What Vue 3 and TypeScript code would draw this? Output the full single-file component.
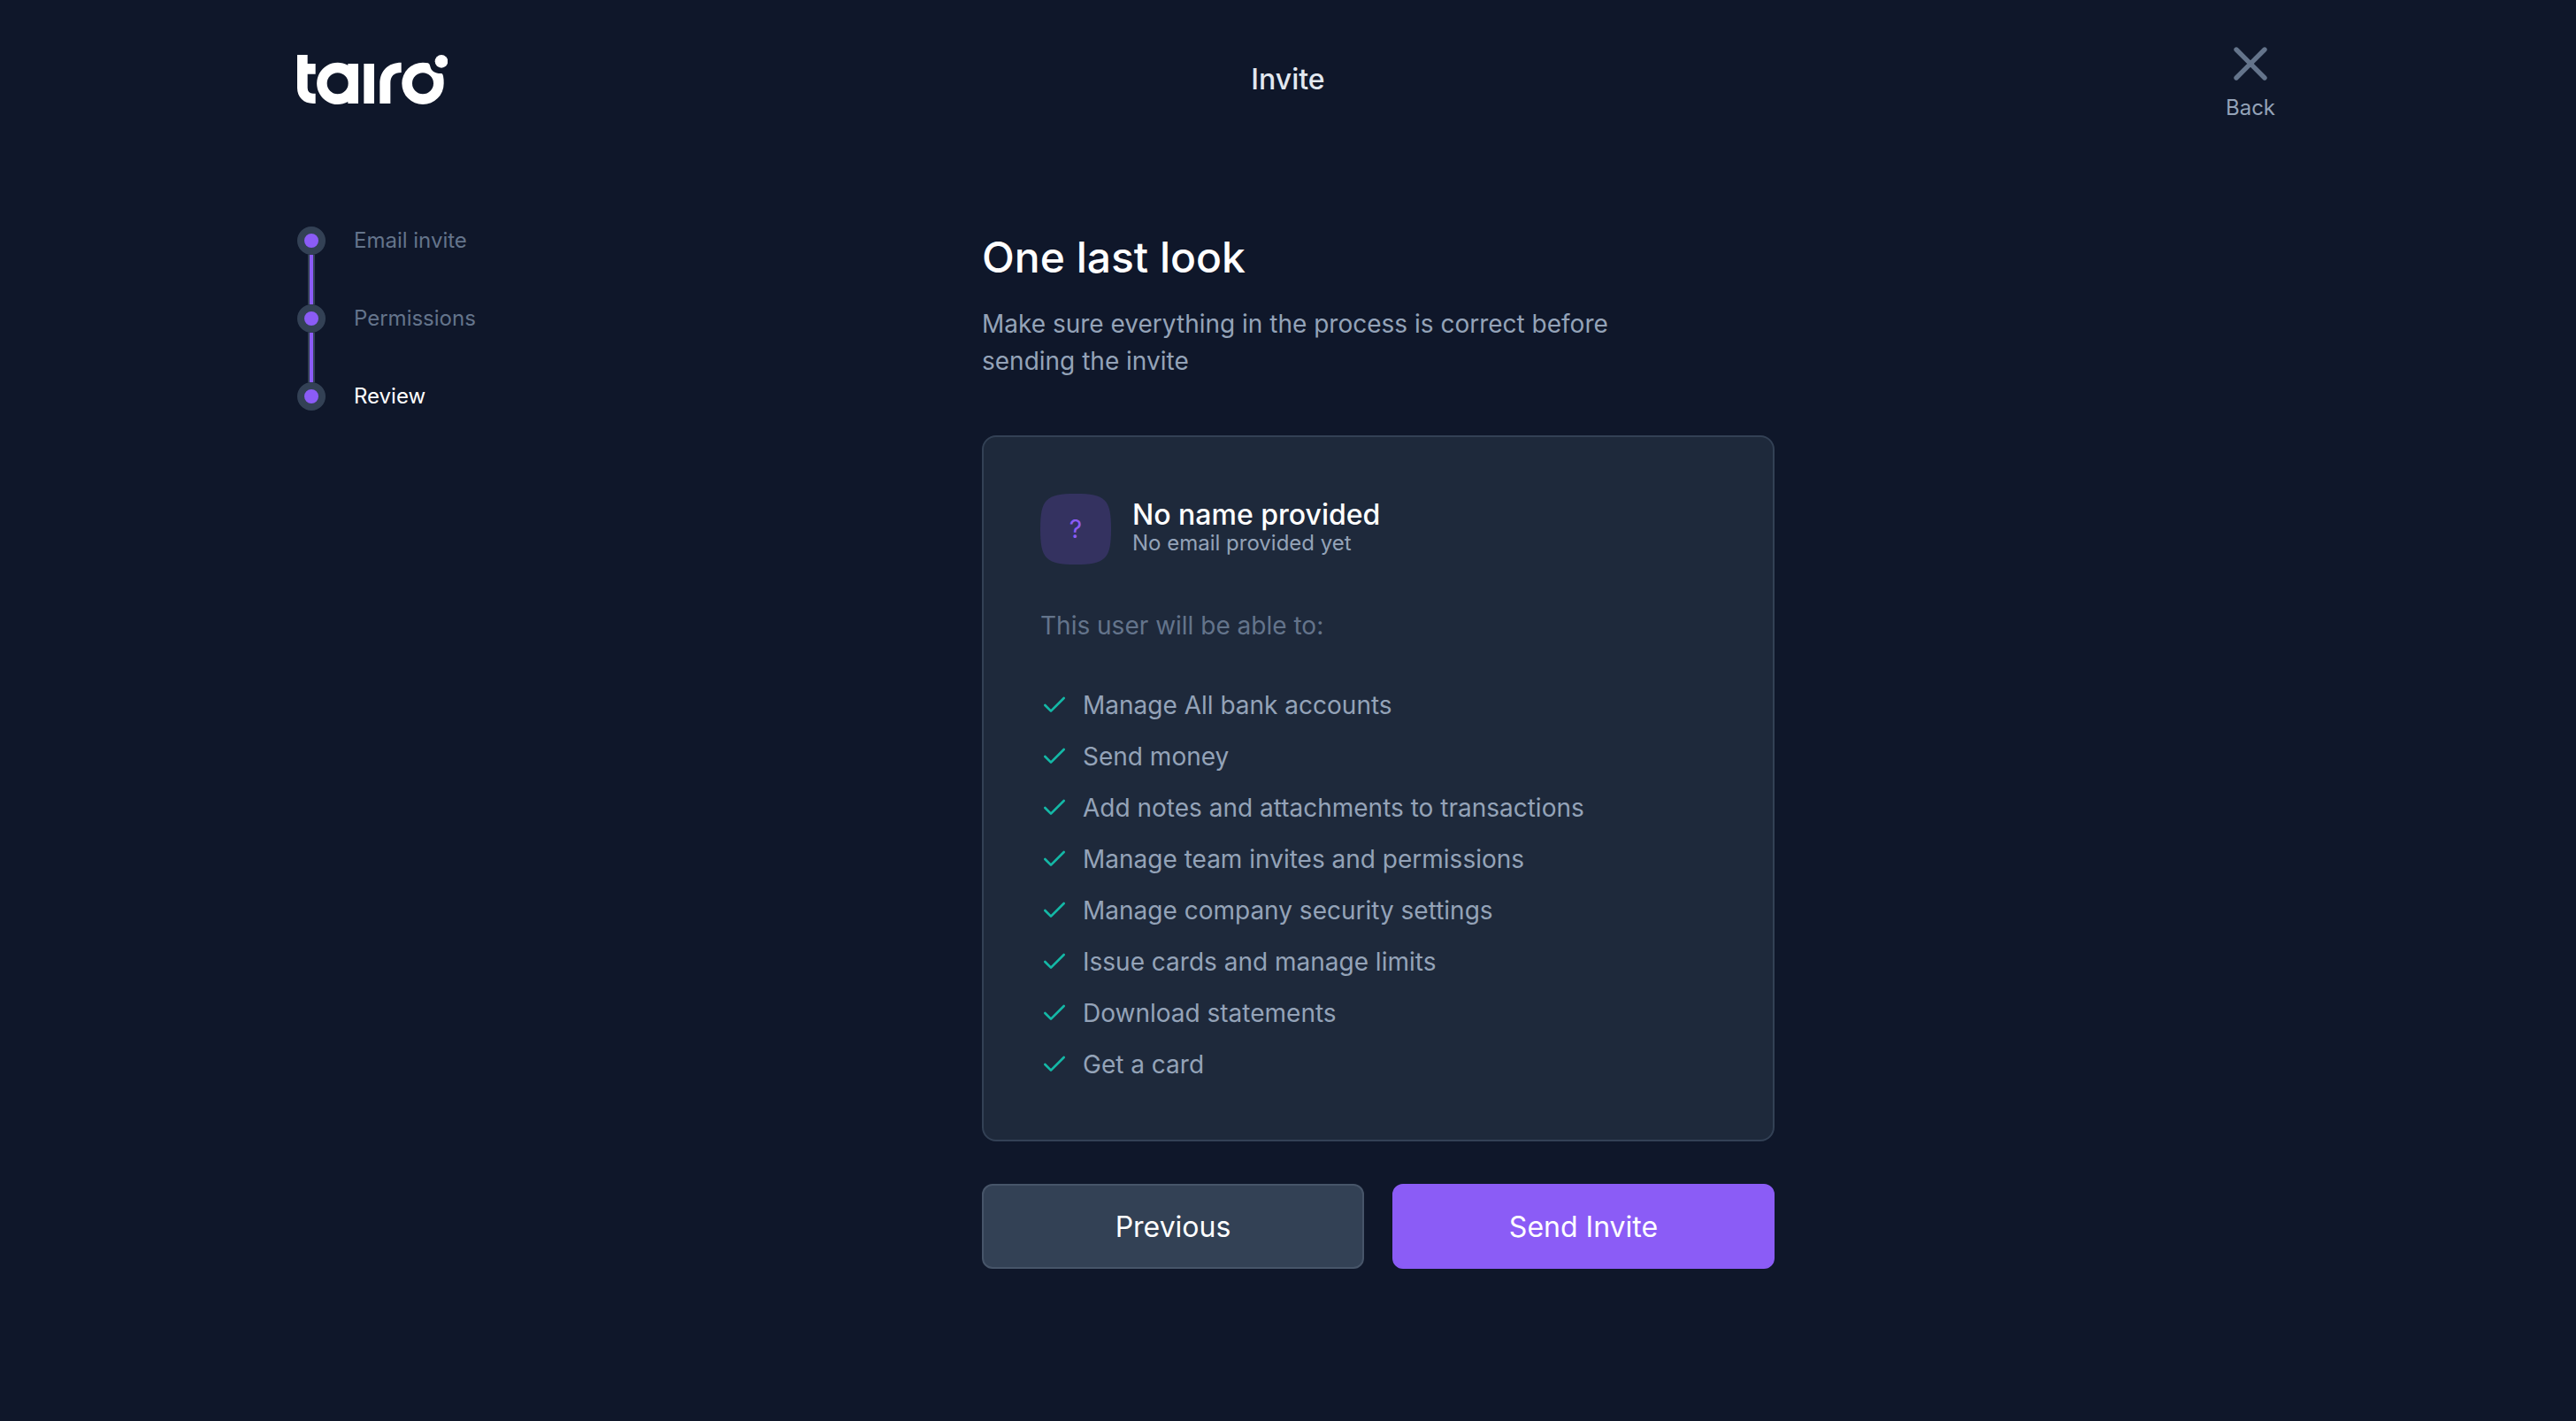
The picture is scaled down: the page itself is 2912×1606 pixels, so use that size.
<script setup lang="ts">
interface Step {
  label: string
  current: boolean
}

const steps: Step[] = [
  { label: 'Email invite', current: false },
  { label: 'Permissions', current: false },
  { label: 'Review', current: true },
]

const permissions: string[] = [
  'Manage All bank accounts',
  'Send money',
  'Add notes and attachments to transactions',
  'Manage team invites and permissions',
  'Manage company security settings',
  'Issue cards and manage limits',
  'Download statements',
  'Get a card',
]
</script>

<template>
  <div class="page">
    <header class="header">
      <a class="logo" href="#" aria-label="tairo">
        <svg viewBox="48 36 510 168" width="170" height="56" fill="currentColor" aria-hidden="true">
          <path d="M48 36H83V66H110V101H83V148Q83 167 102 167H110V201H102C70 201 48 180 48 148Z" />
          <path fill-rule="evenodd" d="M220 66H255V201H220V195A71 71 0 1 1 220 71ZM185 97A36 36 0 1 0 185 169A36 36 0 1 0 185 97Z" />
          <path d="M274 66H309V201H274Z" />
          <path d="M328 201V134C328 90 356 62 401 62V96C376 96 364 108 364 132V201Z" />
          <path fill-rule="evenodd" d="M492 64Q498 67 499 75C502 91 516 100 538 99Q545 101 545 133A71 71 0 1 1 474 62Q484 62 492 64ZM474 97A36 36 0 1 0 474 169A36 36 0 1 0 474 97Z" />
          <circle cx="537" cy="58" r="22" />
        </svg>
      </a>
      <h2 class="header-title">Invite</h2>
      <button class="back" type="button">
        <svg viewBox="0 0 24 24" width="64" height="64" fill="none" stroke="currentColor" stroke-width="2" stroke-linecap="round" stroke-linejoin="round" aria-hidden="true">
          <path d="M18 6L6 18M6 6l12 12" />
        </svg>
        <span>Back</span>
      </button>
    </header>

    <div class="layout">
      <nav aria-label="Progress">
        <ol class="steps">
          <li v-for="step in steps" :key="step.label" class="step" :class="{ current: step.current }">
            <span class="dot"></span>
            <a href="#" :aria-current="step.current ? 'step' : undefined">{{ step.label }}</a>
          </li>
        </ol>
      </nav>

      <main class="content">
        <h1>One last look</h1>
        <p class="lead">Make sure everything in the process is correct before sending the invite</p>

        <section class="card">
          <div class="user">
            <div class="avatar">
              <svg viewBox="0 0 100 100" aria-hidden="true">
                <path d="M0 50C0 8 8 0 50 0S100 8 100 50 92 100 50 100 0 92 0 50Z" />
              </svg>
              <span>?</span>
            </div>
            <div>
              <h3>No name provided</h3>
              <p class="email">No email provided yet</p>
            </div>
          </div>
          <p class="intro">This user will be able to:</p>
          <ul class="permissions">
            <li v-for="item in permissions" :key="item">
              <svg viewBox="0 0 24 24" width="32" height="32" fill="none" stroke="currentColor" stroke-width="2" stroke-linecap="round" stroke-linejoin="round" aria-hidden="true">
                <path d="M20 6L9 17l-5-5" />
              </svg>
              <span>{{ item }}</span>
            </li>
          </ul>
        </section>

        <div class="actions">
          <button class="button" type="button">Previous</button>
          <button class="button primary" type="button">Send Invite</button>
        </div>
      </main>
    </div>
  </div>
</template>

<style>
body {
  margin: 0;
  background: #0f172a;
}
</style>

<style scoped>
.page {
  box-sizing: border-box;
  max-width: 2304px;
  min-height: 100vh;
  margin: 0 auto;
  padding: 0 32px;
  color: #fff;
  background: #0f172a;
  font-family: Inter, sans-serif;
  font-size: 28px;
  line-height: 42px;
}

h1,
h2,
h3,
p,
ol,
ul {
  margin: 0;
  padding: 0;
  list-style: none;
}

button {
  font-family: inherit;
  cursor: pointer;
}

.header {
  display: grid;
  grid-template-columns: 1fr auto 1fr;
  align-items: center;
  padding: 40px 0;
}

.logo {
  justify-self: start;
  color: #fff;
}

.logo svg {
  display: block;
}

.header-title {
  color: #e2e8f0;
  font-size: 32px;
  font-weight: 500;
}

.back {
  display: flex;
  flex-direction: column;
  align-items: center;
  justify-self: end;
  padding: 0;
  border: 0;
  background: none;
  color: #64748b;
  font-size: 24px;
  line-height: 36px;
}

.back span {
  color: #94a3b8;
}

.layout {
  display: grid;
  grid-template-columns: 204px 1fr;
  padding: 76px 0;
}

.steps {
  display: flex;
  flex-direction: column;
  gap: 56px;
}

.step {
  position: relative;
  display: flex;
  align-items: center;
  gap: 32px;
  font-size: 24px;
  line-height: 32px;
}

.step + .step::before {
  content: '';
  position: absolute;
  left: 12px;
  bottom: 100%;
  box-sizing: border-box;
  width: 8px;
  height: 56px;
  border: solid #334155;
  border-width: 0 2px;
  background: #8b5cf6;
}

.step a {
  color: #64748b;
  text-decoration: none;
}

.step.current a {
  color: #fff;
}

.dot {
  box-sizing: border-box;
  width: 32px;
  height: 32px;
  border: 8px solid #334155;
  border-radius: 50%;
  background: #8b5cf6;
}

.content {
  width: 100%;
  max-width: 896px;
  margin: 0 auto;
}

h1 {
  margin-bottom: 20px;
  font-size: 48px;
  font-weight: 500;
  line-height: 69px;
}

.lead {
  max-width: 768px;
  margin-bottom: 63px;
  color: #94a3b8;
}

.card {
  padding: 64px;
  border: 2px solid #334155;
  border-radius: 16px;
  background: #1e293b;
}

.user {
  display: flex;
  align-items: center;
  gap: 24px;
}

.avatar {
  display: grid;
  place-items: center;
  width: 80px;
  height: 80px;
  color: #8b5cf6;
}

.avatar > * {
  grid-area: 1 / 1;
}

.avatar svg {
  width: 80px;
  height: 80px;
  fill: #8b5cf6;
  fill-opacity: 0.2;
}

h3 {
  font-size: 32px;
  font-weight: 500;
  line-height: 32px;
}

.email {
  color: #94a3b8;
  font-size: 24px;
  line-height: 32px;
}

.intro {
  margin: 48px 0;
  color: #64748b;
}

.permissions {
  display: flex;
  flex-direction: column;
  gap: 16px;
  color: #94a3b8;
}

.permissions li {
  display: flex;
  align-items: center;
  gap: 16px;
}

.permissions svg {
  flex: none;
  color: #14b8a6;
}

.actions {
  display: grid;
  grid-template-columns: 1fr 1fr;
  gap: 32px;
  margin-top: 48px;
}

.button {
  height: 96px;
  border: 2px solid #475569;
  border-radius: 12px;
  background: #334155;
  color: #fff;
  font-size: 32px;
}

.button.primary {
  border-color: #8b5cf6;
  background: #8b5cf6;
}
</style>
